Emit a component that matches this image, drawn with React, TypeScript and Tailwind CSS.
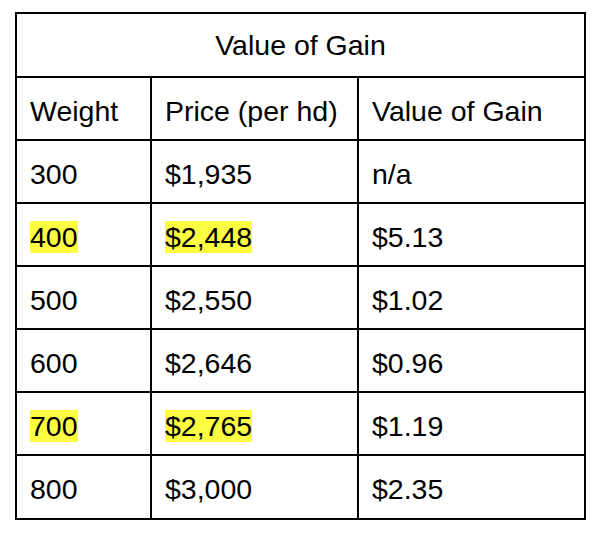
import React from "react";

const rows: { w: string; p: string; v: string; hl?: boolean }[] = [
  { w: "300", p: "$1,935", v: "n/a" },
  { w: "400", p: "$2,448", v: "$5.13", hl: true },
  { w: "500", p: "$2,550", v: "$1.02" },
  { w: "600", p: "$2,646", v: "$0.96" },
  { w: "700", p: "$2,765", v: "$1.19", hl: true },
  { w: "800", p: "$3,000", v: "$2.35" },
];

function Cell({ children, last, bottom }: { children: React.ReactNode; last?: boolean; bottom?: boolean }) {
  return (
    <div
      className={
        "flex items-center pl-[13px] pt-[4px] " +
        (last ? "" : "border-r-2 border-black ") +
        (bottom ? "h-[62px]" : "h-[63px] border-b-2 border-black")
      }
    >
      {children}
    </div>
  );
}

export default function App() {
  return (
    <div className="w-[600px] h-[535px] bg-white pt-[12px] pl-[15px] text-black text-[28.5px] leading-[32px] font-['Liberation_Sans',Arial,sans-serif]">
      <div className="w-[571px] border-2 border-black">
        <div className="h-[64px] border-b-2 border-black flex items-center justify-center">
          Value of Gain
        </div>
        <div className="grid grid-cols-[135px_207px_1fr]">
          <Cell>Weight</Cell>
          <Cell>Price (per hd)</Cell>
          <Cell last>Value of Gain</Cell>
          {rows.map((r, i) => {
            const b = i === rows.length - 1;
            return (
              <React.Fragment key={r.w}>
                <Cell bottom={b}>
                  {r.hl ? <span className="bg-[#fcfc42]">{r.w}</span> : r.w}
                </Cell>
                <Cell bottom={b}>
                  {r.hl ? <span className="bg-[#fcfc42]">{r.p}</span> : r.p}
                </Cell>
                <Cell last bottom={b}>
                  {r.v}
                </Cell>
              </React.Fragment>
            );
          })}
        </div>
      </div>
    </div>
  );
}
